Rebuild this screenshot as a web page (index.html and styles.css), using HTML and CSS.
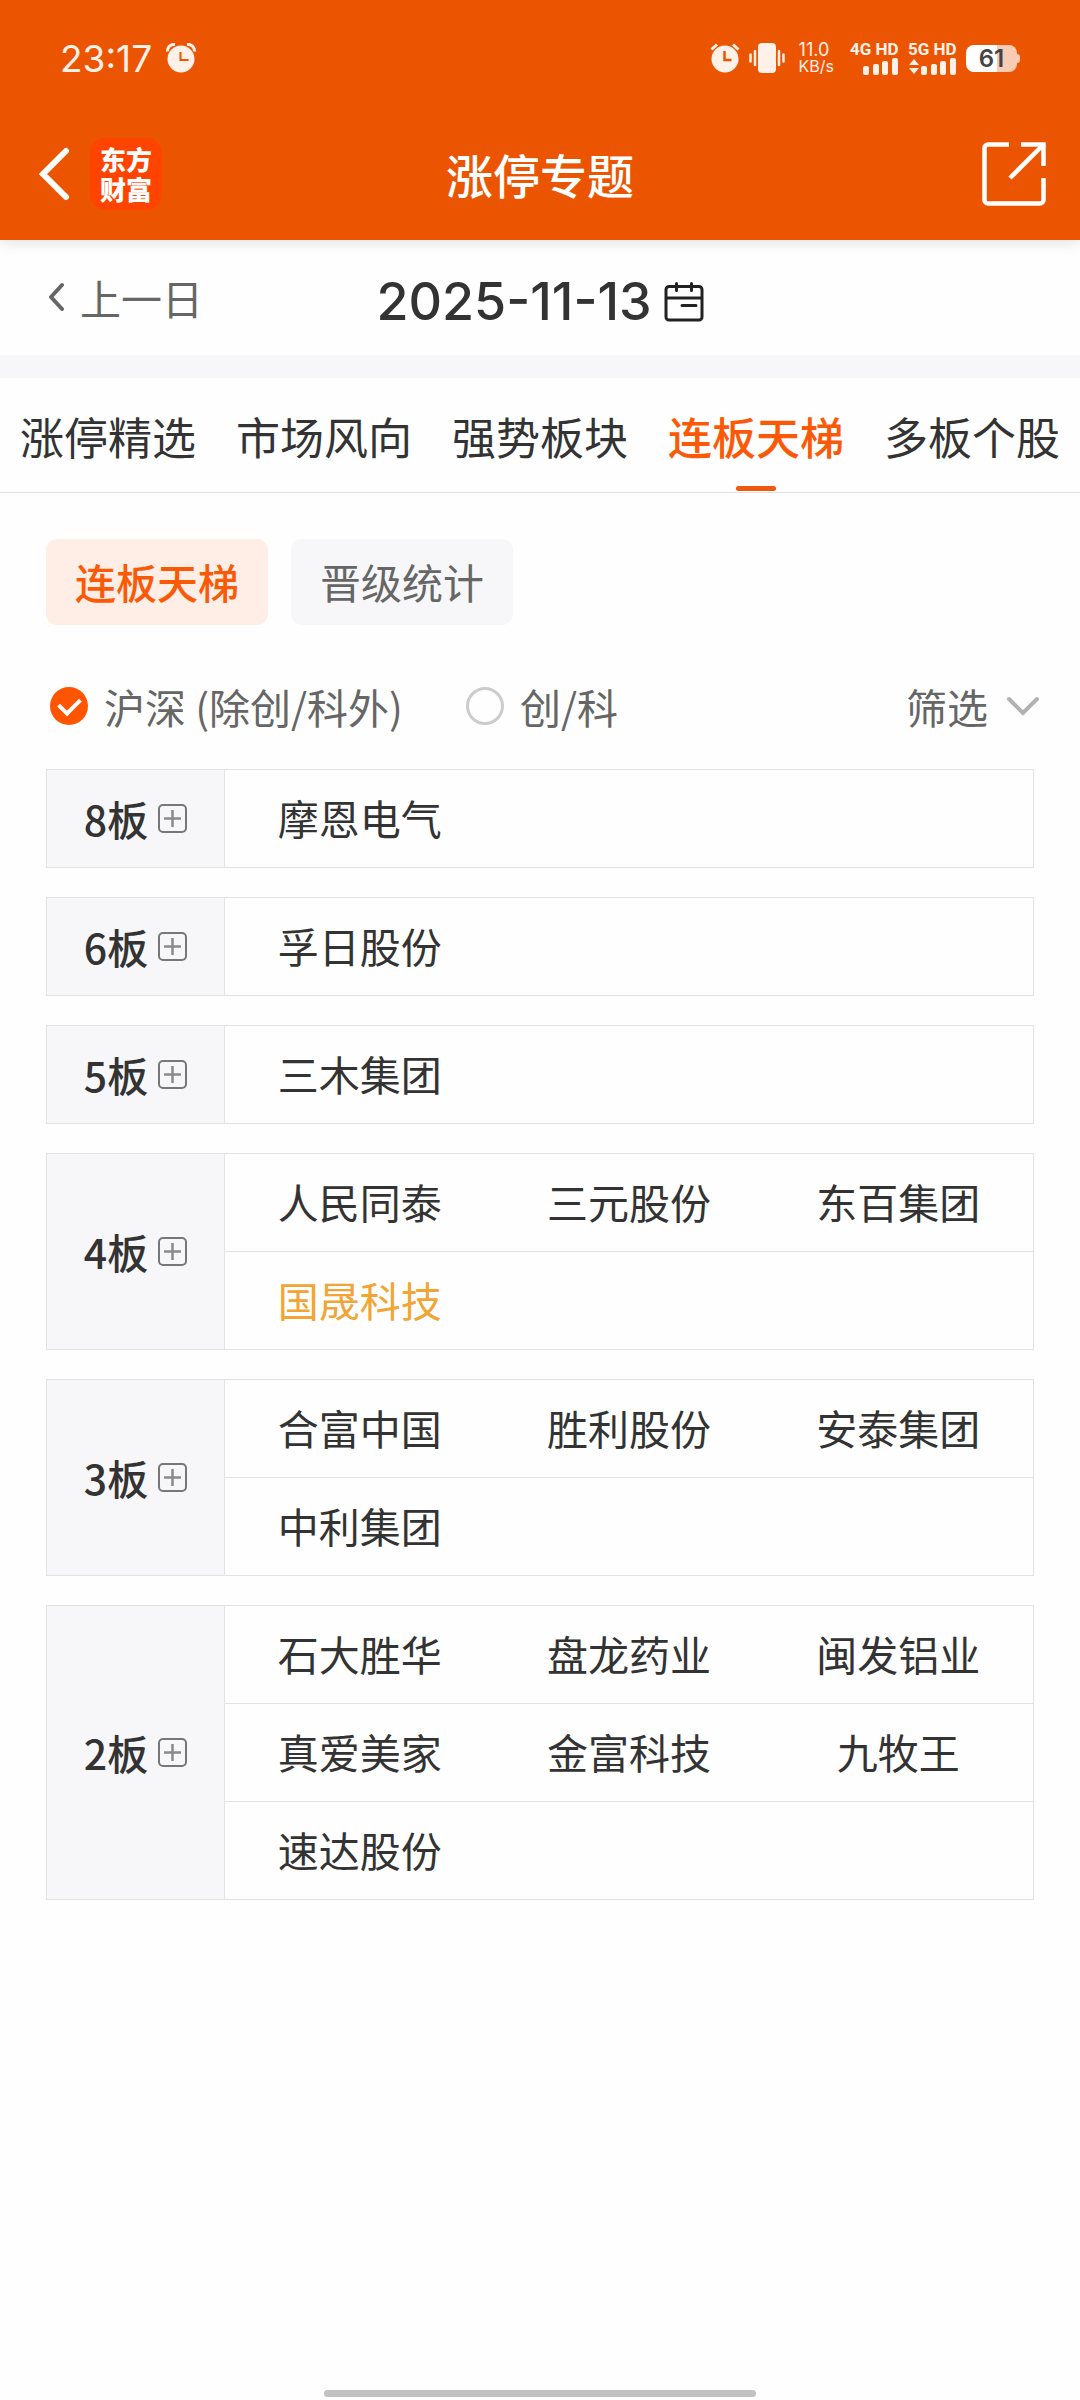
FILE: index.html
```html
<!DOCTYPE html>
<html lang="zh-CN">
<head>
  <meta charset="UTF-8">
  <meta name="viewport" content="width=device-width, initial-scale=1.0">
  <title>涨停专题</title>
  <link rel="stylesheet" href="styles.css">
</head>
<body>
  <!-- plus icon shared by all the ladder rows -->
  <svg class="defs" width="0" height="0" aria-hidden="true">
    <symbol id="plus" viewBox="0 0 29 29">
      <rect x="1" y="1" width="27" height="27" rx="4" fill="none" stroke="#777" stroke-width="2"/>
      <path d="M6 14.5h17M14.5 6v17" fill="none" stroke="#8a8a8a" stroke-width="2.500"/>
    </symbol>
  </svg>

  <header class="header">
    <div class="status-bar">
      <div class="status-left">
        <span class="clock">23:17</span>
        <svg width="30" height="30" viewBox="0 0 30 30">
          <circle cx="15" cy="16" r="13.5" fill="#fff0e8"/>
          <path d="M1.500 8.500A6.500 6.500 0 0 1 9 1.500M28.500 8.500A6.500 6.500 0 0 0 21 1.500" fill="none" stroke="#fff0e8" stroke-width="3"/>
          <path d="M14.500 9v8h8" fill="none" stroke="#eb5502" stroke-width="2"/>
        </svg>
      </div>
      <div class="status-right">
        <svg width="30" height="30" viewBox="0 0 30 30">
          <circle cx="15" cy="16" r="13.500" fill="#fff0e8"/>
          <path d="M1.500 6.500L7 1.500M28.500 6.500L23 1.500" stroke="#fff0e8" stroke-width="3"/>
          <path d="M14.500 8v9h7" fill="none" stroke="#eb5502" stroke-width="2.500"/>
        </svg>
        <svg class="vibrate" width="36" height="30" viewBox="0 0 36 30">
          <rect x="9" y="0" width="18" height="30" rx="4" fill="#fff0e8"/>
          <path d="M6 8v14M1.500 11.500v7M30 8v14M34.500 11.500v7" stroke="#fff0e8" stroke-width="2.500" stroke-linecap="round"/>
        </svg>
        <div class="speed"><span>11.0</span><span class="unit">KB/s</span></div>
        <div class="signal">
          <span>4G HD</span>
          <svg width="49" height="17" viewBox="0 0 49 17" fill="#fff0e8">
            <rect x="13" y="8" width="6" height="9" rx="2"/>
            <rect x="23" y="6" width="6" height="11" rx="2"/>
            <rect x="32" y="3" width="6" height="14" rx="2"/>
            <rect x="42" y="0" width="6" height="17" rx="2"/>
          </svg>
        </div>
        <div class="signal">
          <span>5G HD</span>
          <svg width="49" height="17" viewBox="0 0 49 17" fill="#fff0e8">
            <path d="M1 7l5-6 5 6zM1 10l5 6 5-6z"/>
            <rect x="13" y="8" width="6" height="9" rx="2"/>
            <rect x="23" y="6" width="6" height="11" rx="2"/>
            <rect x="32" y="3" width="6" height="14" rx="2"/>
            <rect x="42" y="0" width="6" height="17" rx="2"/>
          </svg>
        </div>
        <div class="battery"><span>61</span></div>
      </div>
    </div>
    <div class="nav-bar">
      <div class="nav-left">
        <button type="button" class="icon-btn" aria-label="返回">
          <svg width="36" height="54" viewBox="0 0 36 54">
            <path d="M32 4L9 27l23 23" fill="none" stroke="#fff" stroke-width="6" stroke-linecap="round"/>
          </svg>
        </button>
        <div class="logo"><span>东方</span><span>财富</span></div>
      </div>
      <h1>涨停专题</h1>
      <button type="button" class="icon-btn share" aria-label="分享">
        <svg width="64" height="64" viewBox="0 0 64 64">
          <path d="M27 2.500H6a3.500 3.500 0 0 0-3.500 3.500v52a3.500 3.500 0 0 0 3.500 3.500h52a3.500 3.500 0 0 0 3.500-3.500V36M39 2.500h22.500V24M60 4L28 36" fill="none" stroke="#fff" stroke-width="4.500"/>
        </svg>
      </button>
    </div>
  </header>

  <div class="date-bar">
    <button type="button" class="prev-day">
      <svg width="18" height="30" viewBox="0 0 18 30">
        <path d="M16 3L5 15l11 12" fill="none" stroke="#666" stroke-width="4" stroke-linecap="round" stroke-linejoin="round"/>
      </svg>
      上一日
    </button>
    <button type="button" class="date">
      2025-11-13
      <svg width="40" height="40" viewBox="0 0 40 40">
        <path d="M5 4.500h30a3 3 0 0 1 3 3V35a3 3 0 0 1-3 3H5a3 3 0 0 1-3-3V7.500a3 3 0 0 1 3-3zM2 16h36M12.500 1.500v7M27.500 1.500v7M18 23.500h14" fill="none" stroke="#222" stroke-width="3" stroke-linecap="round"/>
      </svg>
    </button>
  </div>

  <nav class="tabs">
    <a href="#">涨停精选</a>
    <a href="#">市场风向</a>
    <a href="#">强势板块</a>
    <a href="#" class="active">连板天梯</a>
    <a href="#">多板个股</a>
  </nav>

  <main class="content">
    <div class="chips">
      <button type="button" class="chip active">连板天梯</button>
      <button type="button" class="chip">晋级统计</button>
    </div>

    <div class="filters">
      <label class="radio" for="market-main">
        <input type="radio" id="market-main" name="market" checked>
        沪深 (除创/科外)
      </label>
      <label class="radio" for="market-gem">
        <input type="radio" id="market-gem" name="market">
        创/科
      </label>
      <button type="button" class="filter-btn">
        筛选
        <svg width="34" height="20" viewBox="0 0 34 20">
          <path d="M3 3l14 14L31 3" fill="none" stroke="#b2b2b2" stroke-width="4" stroke-linecap="round"/>
        </svg>
      </button>
    </div>

    <div class="ladder">
      <table>
        <tr>
          <th scope="row"><div class="level">8板<button type="button" class="icon-btn" aria-label="展开8板"><svg width="29" height="29"><use href="#plus"/></svg></button></div></th>
          <td>摩恩电气</td><td></td><td></td>
        </tr>
      </table>
      <table>
        <tr>
          <th scope="row"><div class="level">6板<button type="button" class="icon-btn" aria-label="展开6板"><svg width="29" height="29"><use href="#plus"/></svg></button></div></th>
          <td>孚日股份</td><td></td><td></td>
        </tr>
      </table>
      <table>
        <tr>
          <th scope="row"><div class="level">5板<button type="button" class="icon-btn" aria-label="展开5板"><svg width="29" height="29"><use href="#plus"/></svg></button></div></th>
          <td>三木集团</td><td></td><td></td>
        </tr>
      </table>
      <table>
        <tr>
          <th scope="rowgroup" rowspan="2"><div class="level">4板<button type="button" class="icon-btn" aria-label="展开4板"><svg width="29" height="29"><use href="#plus"/></svg></button></div></th>
          <td>人民同泰</td><td>三元股份</td><td>东百集团</td>
        </tr>
        <tr>
          <td class="highlight">国晟科技</td><td></td><td></td>
        </tr>
      </table>
      <table>
        <tr>
          <th scope="rowgroup" rowspan="2"><div class="level">3板<button type="button" class="icon-btn" aria-label="展开3板"><svg width="29" height="29"><use href="#plus"/></svg></button></div></th>
          <td>合富中国</td><td>胜利股份</td><td>安泰集团</td>
        </tr>
        <tr>
          <td>中利集团</td><td></td><td></td>
        </tr>
      </table>
      <table>
        <tr>
          <th scope="rowgroup" rowspan="3"><div class="level">2板<button type="button" class="icon-btn" aria-label="展开2板"><svg width="29" height="29"><use href="#plus"/></svg></button></div></th>
          <td>石大胜华</td><td>盘龙药业</td><td>闽发铝业</td>
        </tr>
        <tr>
          <td>真爱美家</td><td>金富科技</td><td>九牧王</td>
        </tr>
        <tr>
          <td>速达股份</td><td></td><td></td>
        </tr>
      </table>
    </div>
  </main>

  <div class="home-bar"></div>
</body>
</html>
```

FILE: styles.css
```css
* {
  box-sizing: border-box;
}
body {
  margin: 0;
  min-height: 100vh;
  display: flex;
  flex-direction: column;
  font-family: "Noto Sans CJK SC", sans-serif;
  font-size: 41px;
  color: #333;
  background: #fefefe;
}
button {
  font: inherit;
  color: inherit;
  background: none;
  border: none;
  padding: 0;
  cursor: pointer;
}
svg {
  display: block;
  flex: none;
}
.defs {
  position: absolute;
}

/* header */
.header {
  position: relative;
  background: #eb5502;
  color: #fff;
  box-shadow: 0 2px 14px rgba(0, 0, 0, 0.12);
}
.status-bar {
  display: flex;
  align-items: center;
  justify-content: space-between;
  height: 112px;
  padding: 4px 63px 0 60px;
  font-family: Inter, sans-serif;
  color: #fff0e8;
}
.status-left,
.status-right {
  display: flex;
  align-items: center;
}
.status-left {
  gap: 14px;
}
.status-right {
  gap: 9px;
}
.clock {
  font-size: 37px;
}
.speed {
  display: flex;
  flex-direction: column;
  margin: 0 7px 0 5px;
  font-size: 18px;
  line-height: 17px;
}
.speed .unit {
  font-size: 16px;
}
.signal {
  display: flex;
  flex-direction: column;
  gap: 1px;
  font-family: Roboto, sans-serif;
  font-size: 17px;
  font-weight: bold;
  line-height: 16px;
}
.battery {
  position: relative;
  width: 51px;
  height: 27px;
  border-radius: 8px;
  background: linear-gradient(to right, #fff 60%, #f9cbb3 60%);
  color: #444;
  font-size: 24px;
  font-weight: 600;
  line-height: 27px;
  text-align: center;
}
.battery::after {
  content: "";
  position: absolute;
  right: -3px;
  top: 9px;
  width: 3px;
  height: 9px;
  border-radius: 0 3px 3px 0;
  background: #f9cbb3;
}
.nav-bar {
  display: grid;
  grid-template-columns: 1fr auto 1fr;
  align-items: center;
  height: 128px;
  padding: 0 34px 4px;
}
.nav-left {
  display: flex;
  align-items: center;
  gap: 20px;
}
.logo {
  display: flex;
  flex-direction: column;
  justify-content: center;
  width: 72px;
  height: 72px;
  border-radius: 15px;
  background: #ff4400;
  font-size: 26px;
  font-weight: 900;
  line-height: 30px;
  text-align: center;
}
h1 {
  margin: 0;
  font-size: 47px;
  font-weight: 500;
  line-height: 60px;
}
.share {
  justify-self: end;
}

/* date */
.date-bar {
  display: grid;
  grid-template-columns: 1fr auto 1fr;
  align-items: center;
  height: 115px;
  padding: 0 46px;
}
.prev-day {
  display: flex;
  align-items: center;
  gap: 16px;
  padding-bottom: 2px;
  color: #666;
  line-height: 60px;
}
.date {
  display: flex;
  align-items: center;
  gap: 12px;
  padding-top: 8px;
  font-family: Inter, sans-serif;
  font-size: 52px;
  font-weight: 500;
  line-height: 60px;
}

/* tabs */
.tabs {
  display: flex;
  height: 138px;
  border-top: 23px solid #f7f7fa;
  border-bottom: 1px solid #e3e3e3;
}
.tabs a {
  position: relative;
  flex: 1;
  font-size: 44px;
  line-height: 116px;
  text-align: center;
  color: #333;
  text-decoration: none;
}
.tabs .active {
  color: #fa5a08;
  font-weight: 500;
}
.tabs .active::after {
  content: "";
  position: absolute;
  left: 50%;
  bottom: 1px;
  width: 40px;
  height: 5px;
  margin-left: -20px;
  border-radius: 3px;
  background: #ee5a10;
}

/* content */
.content {
  padding: 46px;
}
.chips {
  display: flex;
  gap: 23px;
}
.chip {
  height: 86px;
  padding: 0 29px 2px;
  border-radius: 11px;
  background: #f7f7fa;
  color: #666;
}
.chip.active {
  background: #ffeee6;
  color: #fa5a08;
  font-weight: 500;
}
.filters {
  display: flex;
  align-items: center;
  gap: 59px;
  margin: 50px 0 32px;
  color: #666;
  line-height: 62px;
}
.radio {
  display: flex;
  align-items: center;
  gap: 16px;
}
.radio input {
  appearance: none;
  width: 38px;
  height: 38px;
  margin: 0 0 0 4px;
  border: 3px solid #ccc;
  border-radius: 50%;
}
.radio input:checked {
  display: grid;
  place-items: center;
  border: none;
  background: #ff5500;
}
.radio input:checked::after {
  content: "";
  width: 17px;
  height: 10px;
  margin-bottom: 5px;
  border-left: 4px solid #fff;
  border-bottom: 4px solid #fff;
  transform: rotate(-45deg);
}
.filter-btn {
  display: flex;
  align-items: center;
  gap: 18px;
  margin: 0 -6px 0 auto;
}

/* ladder */
.ladder {
  display: grid;
  gap: 29px;
}
table {
  width: 100%;
  table-layout: fixed;
  border-spacing: 0;
  border: 1px solid #e3e3e3;
  border-bottom: none;
}
th,
td {
  height: 98px;
  padding: 0 0 3px;
  border-bottom: 1px solid #e3e3e3;
  text-align: center;
  font-weight: normal;
  line-height: 60px;
}
th {
  width: 178px;
  padding: 0 0 1px;
  border-right: 1px solid #e3e3e3;
  background: #f7f7fa;
  font-weight: 500;
}
.level {
  display: flex;
  align-items: center;
  justify-content: center;
  gap: 10px;
}
.highlight {
  color: #f0a535;
}

.home-bar {
  width: 40%;
  height: 7px;
  margin: auto auto 3px;
  border-radius: 4px;
  background: #c1c1c1;
}
```
